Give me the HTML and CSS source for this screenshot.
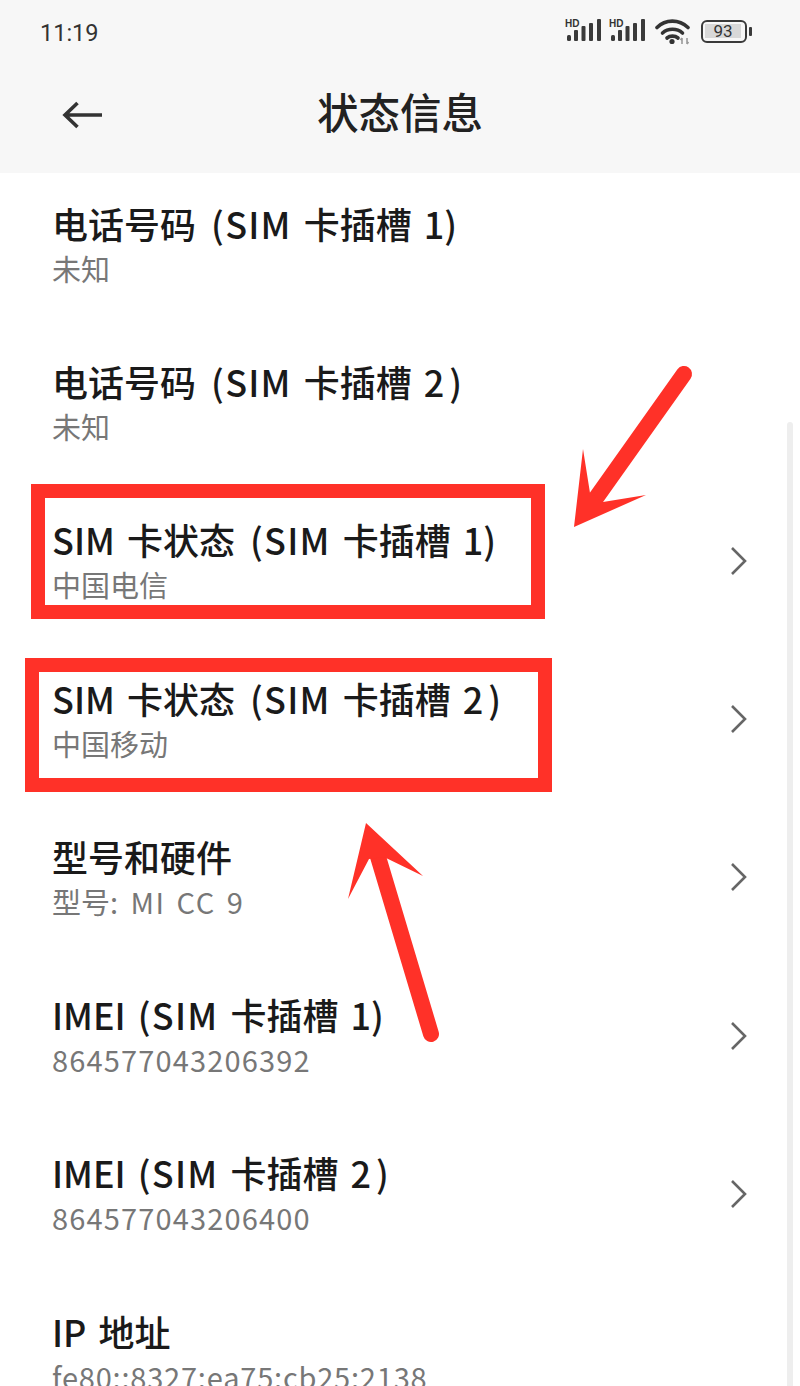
FILE: index.html
```html
<!DOCTYPE html>
<html lang="zh-CN">
<head>
<meta charset="utf-8">
<title>状态信息</title>
<link rel="stylesheet" href="styles.css">
</head>
<body>
<div class="screen">
  <header class="header">
    <div class="status">
      <span class="time">11:19</span>
      <div class="status-icons">
        <svg class="sig" width="38" height="26" viewBox="0 0 38 26">
          <text x="0" y="9" class="hd">HD</text>
          <g class="bars"><rect x="2" y="17" width="4" height="6" rx="1.5"/><rect x="9" y="12" width="4" height="11" rx="1"/><rect x="16.500" y="8" width="4" height="15" rx="1"/><rect x="24" y="5" width="4" height="18" rx="1"/><rect x="32" y="1" width="4" height="22" rx="1"/></g>
        </svg>
        <svg class="sig sig2" width="38" height="26" viewBox="0 0 38 26">
          <text x="0" y="9" class="hd">HD</text>
          <g class="bars"><rect x="2" y="17" width="4" height="6" rx="1.5"/><rect x="9" y="12" width="4" height="11" rx="1"/><rect x="16.500" y="8" width="4" height="15" rx="1"/><rect x="24" y="5" width="4" height="18" rx="1"/><rect x="32" y="1" width="4" height="22" rx="1"/></g>
        </svg>
        <svg class="wifi" width="36" height="28" viewBox="0 0 36 28">
          <path class="arc" d="M2 10.500C10.500 2 24 2 33 10.500"/>
          <path class="arc" d="M7.500 16C13 11 22 11 27.500 16"/>
          <path class="arc" d="M12 21C15 18.500 20 18.500 23 21"/>
          <circle cx="17" cy="24.500" r="2.600" fill="#333"/>
          <path class="tiny" d="M27 21v6M27 21l-1.500 2M32 21v6M32 27l1.500-2"/>
        </svg>
        <div class="battery">
          <div class="battery-body"><span class="battery-fill">93</span></div>
          <span class="battery-cap"></span>
        </div>
      </div>
    </div>
    <div class="nav">
      <svg class="back" width="42" height="30" viewBox="0 0 42 30"><path d="M40 15H3M15.500 3 3 15l12.500 12"/></svg>
      <h1 class="nav-title">状态信息</h1>
    </div>
  </header>

  <main class="list">
    <div class="row"><div class="texts"><div class="title">电话号码 <span class="lat">(SIM</span> 卡插槽 1)</div><div class="sub">未知</div></div></div>
    <div class="row"><div class="texts"><div class="title">电话号码 <span class="lat">(SIM</span> 卡插槽 <span class="two">2</span>)</div><div class="sub">未知</div></div></div>
    <div class="row"><div class="texts"><div class="title">SIM 卡状态 <span class="lat">(SIM</span> 卡插槽 1)</div><div class="sub">中国电信</div></div><svg class="chev" width="18" height="30" viewBox="0 0 18 30"><path d="M2 2l13 13L2 28"/></svg></div>
    <div class="row"><div class="texts"><div class="title">SIM 卡状态 <span class="lat">(SIM</span> 卡插槽 <span class="two">2</span>)</div><div class="sub">中国移动</div></div><svg class="chev" width="18" height="30" viewBox="0 0 18 30"><path d="M2 2l13 13L2 28"/></svg></div>
    <div class="row"><div class="texts"><div class="title">型号和硬件</div><div class="sub">型号<span class="sub-lat">: MI CC 9</span></div></div><svg class="chev" width="18" height="30" viewBox="0 0 18 30"><path d="M2 2l13 13L2 28"/></svg></div>
    <div class="row"><div class="texts"><div class="title"><span class="imei">IMEI</span> <span class="lat">(SIM</span> 卡插槽 1)</div><div class="sub num">864577043206392</div></div><svg class="chev" width="18" height="30" viewBox="0 0 18 30"><path d="M2 2l13 13L2 28"/></svg></div>
    <div class="row"><div class="texts"><div class="title"><span class="imei">IMEI</span> <span class="lat">(SIM</span> 卡插槽 <span class="two">2</span>)</div><div class="sub num">864577043206400</div></div><svg class="chev" width="18" height="30" viewBox="0 0 18 30"><path d="M2 2l13 13L2 28"/></svg></div>
    <div class="row"><div class="texts"><div class="title">IP 地址</div><div class="sub ip">fe80::8327:ea75:cb25:2138</div></div></div>
  </main>

  <div class="scrollbar"></div>
  <div class="mark mark-1"></div>
  <div class="mark mark-2"></div>
  <svg class="arrows" width="800" height="1386" viewBox="0 0 800 1386">
    <path class="shaft" d="M684 374 596 498"/>
    <path class="head" d="M574 527 583 449 590 493 603 502 646 495Z"/>
    <path class="shaft" d="M431 1034 376 850"/>
    <path class="head" d="M366 823 348 899 369 859 384 857 423 876Z"/>
  </svg>
</div>
</body>
</html>
```

FILE: styles.css
```css
* { box-sizing: border-box; margin: 0; padding: 0; }
html, body { width: 800px; height: 1386px; overflow: hidden; background: #fff; }
body { font-family: "Noto Sans CJK SC", "Noto Sans", sans-serif; color: #1a1a1a; }
.screen { position: relative; width: 800px; height: 1386px; overflow: hidden; }

.header { position: relative; z-index: 1; height: 173px; background: #f7f7f7; }
.status { display: flex; justify-content: space-between; align-items: center; height: 64px; padding: 0 48px 2px 40px; }
.time { font: 400 23.500px/1 Roboto, sans-serif; color: #333; position: relative; top: 3px; }
.status-icons { display: flex; align-items: center; }
.sig { display: block; margin-right: 6px; }
.sig2 { margin-right: 8px; }
.hd { font: 700 10px "Liberation Sans", sans-serif; fill: #333; }
.bars { fill: #3a3a3a; }
.wifi { display: block; margin-right: 10px; fill: none; }
.arc { fill: none; stroke: #333; stroke-width: 3.6; stroke-linecap: round; }
.tiny { fill: none; stroke: #999; stroke-width: 1.6; }
.battery { display: flex; align-items: center; }
.battery-body { width: 46px; height: 23px; border: 2.500px solid #3a3a3a; border-radius: 6px; padding: 2px; }
.battery-fill { display: block; width: 36px; height: 14px; background: #d8d8d8; font: 400 17px/14px Roboto, sans-serif; color: #333; text-align: center; }
.battery-cap { width: 3px; height: 9px; margin-left: 2px; background: #3a3a3a; border-radius: 1px; }

.nav { position: relative; display: flex; align-items: center; justify-content: center; height: 102px; padding-bottom: 6px; }
.back { position: absolute; left: 62px; top: 36px; fill: none; stroke: #333; stroke-width: 3.6; }
.nav-title { font-size: 41.500px; line-height: 1; font-weight: 500; color: #222; }

.list { margin-top: -8px; }
.row { display: flex; align-items: center; justify-content: space-between; height: 158.300px; padding: 0 52px 0 52px; }
.texts { display: flex; flex-direction: column; gap: 5px; }
.title { font-size: 36px; line-height: 42px; font-weight: 500; color: #1a1a1a; white-space: nowrap; word-spacing: 4px; }
.lat { letter-spacing: 1.200px; margin-left: 3px; }
.two { letter-spacing: 5px; }
.imei { margin-right: -3px; }
.sub { font-size: 29px; line-height: 38px; font-weight: 400; color: #777; white-space: nowrap; }
.sub-lat { letter-spacing: 1.500px; word-spacing: 3px; }
.num { letter-spacing: 1.150px; }
.ip { letter-spacing: 0.800px; }
.chev { display: block; fill: none; stroke: #666; stroke-width: 2.600; }

.scrollbar { position: absolute; left: 787px; top: 422px; bottom: 0; width: 6px; background: #eee; border-radius: 3px 3px 0 0; }
.mark { position: absolute; border: 14px solid #ff3128; }
.mark-1 { left: 31px; top: 484px; width: 514px; height: 135px; }
.mark-2 { left: 25px; top: 658px; width: 527px; height: 134px; }
.arrows { position: absolute; left: 0; top: 0; }
.shaft { fill: none; stroke: #ff3128; stroke-width: 16; stroke-linecap: round; }
.head { fill: #ff3128; }
```
